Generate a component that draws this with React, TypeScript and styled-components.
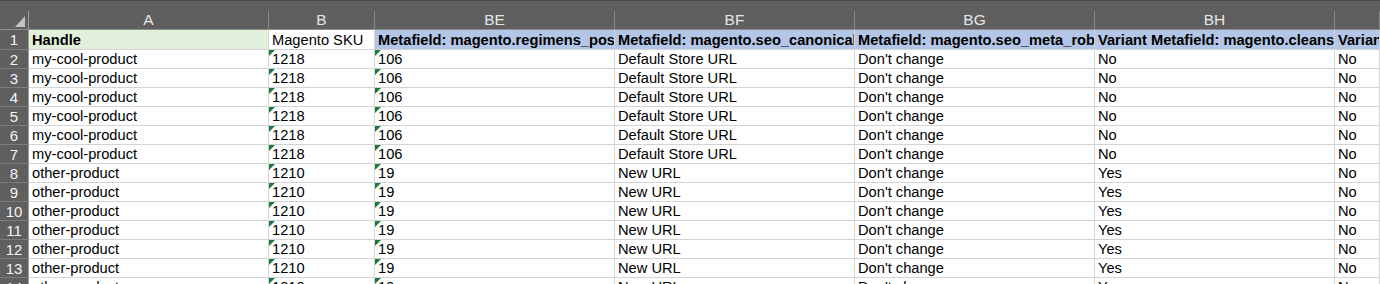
import React from 'react'
import styled, { createGlobalStyle } from 'styled-components'

const GlobalStyle = createGlobalStyle`
  body {
    margin: 0;
    background: #ffffff;
  }
`

const Sheet = styled.div`
  width: 1380px;
  height: 284px;
  overflow: hidden;
  background: #ffffff;
  font-family: 'Liberation Sans', Arial, sans-serif;
  font-size: 14.67px;
  color: #000000;
`

const ColumnBar = styled.div`
  display: flex;
  height: 30px;
  box-sizing: border-box;
  padding-top: 10px;
  background: #5f5f5f;
  border-top: 1px solid #4a4a4a;
  border-bottom: 1px solid #8e8e8e;
`

const Corner = styled.div`
  flex: 0 0 29px;
  box-sizing: border-box;
  display: flex;
  justify-content: flex-end;
  align-items: flex-end;
  padding: 0 3px 2px 0;
  border-right: 1px solid #9c9c9c;
`

const ColLetter = styled.div<{ $w?: number }>`
  flex: ${(p) => (p.$w ? `0 0 ${p.$w}px` : '1 1 0')};
  min-width: 0;
  box-sizing: border-box;
  border-right: 1px solid #8a8a8a;
  color: #e6e6e6;
  font-size: 15.5px;
  line-height: 18px;
  text-align: center;
`

const Row = styled.div<{ $h?: number }>`
  display: flex;
  height: ${(p) => p.$h ?? 19}px;
`

const RowNum = styled.div`
  flex: 0 0 29px;
  box-sizing: border-box;
  display: flex;
  align-items: center;
  justify-content: center;
  background: #5f5f5f;
  color: #f4f4f4;
  font-size: 15px;
  border-right: 1px solid #9c9c9c;
  border-bottom: 1px solid #7c7c7c;
`

const Cell = styled.div<{ $w?: number; $tone?: 'green' | 'blue'; $bold?: boolean; $flag?: boolean }>`
  position: relative;
  flex: ${(p) => (p.$w ? `0 0 ${p.$w}px` : '1 1 0')};
  min-width: 0;
  box-sizing: border-box;
  display: flex;
  align-items: center;
  padding: 0 2px 0 3px;
  overflow: hidden;
  white-space: nowrap;
  font-weight: ${(p) => (p.$bold ? 700 : 400)};
  background: ${(p) => (p.$tone === 'green' ? '#e2efda' : p.$tone === 'blue' ? '#b4c6e7' : '#ffffff')};
  border-right: 1px solid #d4d4d4;
  border-bottom: 1px solid #d4d4d4;

  &::before {
    content: '';
    display: ${(p) => (p.$flag ? 'block' : 'none')};
    position: absolute;
    left: 0;
    top: 0;
    border-top: 6px solid #1d7a3e;
    border-right: 6px solid transparent;
  }
`

const widths = [240, 106, 240, 240, 240, 240, 0]
// the last column runs past the right edge, so its letter is out of view
const letters = ['A', 'B', 'BE', 'BF', 'BG', 'BH', '']

const headers = [
  'Handle',
  'Magento SKU',
  'Metafield: magento.regimens_position [number_integer]',
  'Metafield: magento.seo_canonical_url [single_line_text_field]',
  'Metafield: magento.seo_meta_robots [single_line_text_field]',
  'Variant Metafield: magento.cleanse [boolean]',
  'Variant Metafield: magento.subscription [boolean]',
]

const cool = ['my-cool-product', '1218', '106', 'Default Store URL', "Don't change", 'No', 'No']
const other = ['other-product', '1210', '19', 'New URL', "Don't change", 'Yes', 'No']

const rows = [cool, cool, cool, cool, cool, cool, other, other, other, other, other, other, other]

const App = () => {
  return (
    <Sheet>
      <GlobalStyle />
      <ColumnBar>
        <Corner>
          <svg width="10" height="11" viewBox="0 0 10 11">
            <polygon points="0,11 10,0 10,11" fill="#c4c4c4" />
          </svg>
        </Corner>
        {letters.map((l, i) => (
          <ColLetter key={i} $w={widths[i] || undefined}>{l}</ColLetter>
        ))}
      </ColumnBar>

      <Row $h={20}>
        <RowNum>1</RowNum>
        {headers.map((h, i) => (
          <Cell
            key={h}
            $w={widths[i] || undefined}
            $bold={i !== 1}
            $tone={i === 0 ? 'green' : i >= 2 ? 'blue' : undefined}
          >
            {h}
          </Cell>
        ))}
      </Row>

      {rows.map((r, n) => (
        <Row key={n}>
          <RowNum>{n + 2}</RowNum>
          {r.map((v, i) => (
            <Cell key={i} $w={widths[i] || undefined} $flag={i === 1 || i === 2}>
              {v}
            </Cell>
          ))}
        </Row>
      ))}
    </Sheet>
  )
}

export default App
